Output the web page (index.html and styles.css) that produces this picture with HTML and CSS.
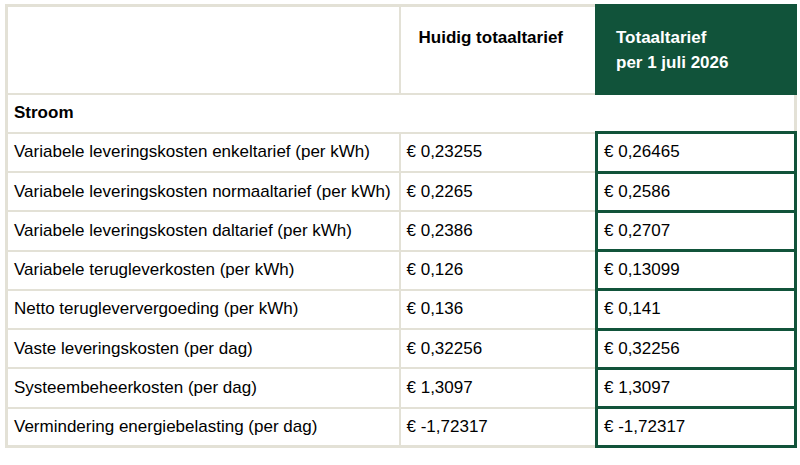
FILE: index.html
```html
<!DOCTYPE html>
<html lang="nl">
<head>
<meta charset="utf-8">
<title>Tarieven</title>
<link rel="stylesheet" href="styles.css">
</head>
<body>
<table class="tariffs">
  <colgroup>
    <col class="c1">
    <col class="c2">
    <col class="c3">
  </colgroup>
  <thead>
    <tr class="head-row">
      <th class="h-empty"></th>
      <th class="h-current">Huidig totaaltarief</th>
      <th class="h-new">Totaaltarief<br>per 1 juli 2026</th>
    </tr>
  </thead>
  <tbody>
    <tr class="section-row">
      <td class="section" colspan="3">Stroom</td>
    </tr>
    <tr><td>Variabele leveringskosten enkeltarief (per kWh)</td><td class="cur">€ 0,23255</td><td class="new">€ 0,26465</td></tr>
    <tr><td>Variabele leveringskosten normaaltarief (per kWh)</td><td class="cur">€ 0,2265</td><td class="new">€ 0,2586</td></tr>
    <tr><td>Variabele leveringskosten daltarief (per kWh)</td><td class="cur">€ 0,2386</td><td class="new">€ 0,2707</td></tr>
    <tr><td>Variabele terugleverkosten (per kWh)</td><td class="cur">€ 0,126</td><td class="new">€ 0,13099</td></tr>
    <tr><td>Netto terugleververgoeding (per kWh)</td><td class="cur">€ 0,136</td><td class="new">€ 0,141</td></tr>
    <tr><td>Vaste leveringskosten (per dag)</td><td class="cur">€ 0,32256</td><td class="new">€ 0,32256</td></tr>
    <tr><td>Systeembeheerkosten (per dag)</td><td class="cur">€ 1,3097</td><td class="new">€ 1,3097</td></tr>
    <tr><td>Vermindering energiebelasting (per dag)</td><td class="cur">€ -1,72317</td><td class="new">€ -1,72317</td></tr>
  </tbody>
</table>
</body>
</html>
```
FILE: styles.css
```css
html, body {
  margin: 0;
  padding: 0;
  background: #ffffff;
}

body {
  font-family: "Liberation Sans", Arial, sans-serif;
  font-size: 17px;
  color: #000000;
}

.tariffs {
  border-collapse: collapse;
  width: 792px;
  margin: 4px 0 0 5px;
  border: 3px solid #e3e1d6;
  table-layout: fixed;
}

.c1 { width: 393px; }
.c2 { width: 197px; }
.c3 { width: 199px; }

.tariffs th,
.tariffs td {
  border: 2px solid #e3e1d6;
  text-align: left;
  padding: 0 6px;
  line-height: 20px;
  height: 36.25px;
  vertical-align: middle;
}

.tariffs .head-row th {
  vertical-align: top;
  font-weight: bold;
  line-height: 25px;
  height: 67px;
  padding: 18px 18px 0 18px;
}

.tariffs .h-new {
  background: #11533a;
  color: #ffffff;
  border: 3px solid #11533a;
}

.tariffs .cur,
.tariffs .h-current {
  border-right: none;
}

.tariffs .new {
  border: 3px solid #11533a;
}

.tariffs .section {
  font-weight: bold;
}
```
